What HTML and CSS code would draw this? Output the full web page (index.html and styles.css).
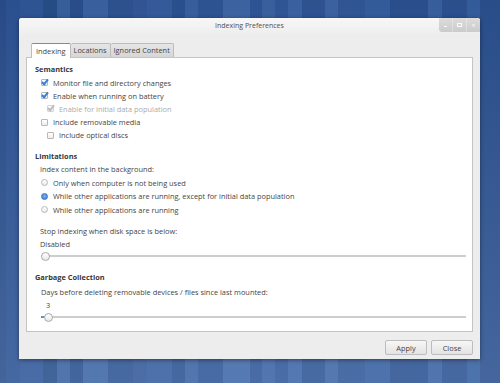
FILE: index.html
```html
<!DOCTYPE html>
<html lang="en">
<head>
    <meta charset="UTF-8">
    <title>Indexing Preferences</title>
    <link rel="stylesheet" href="styles.css">
</head>
<body>
    <div class="window">
        <div class="titlebar">
            <span></span>
            <span class="title">Indexing Preferences</span>
            <div class="controls">
                <span class="ctl"><i class="min"></i></span>
                <span class="ctl"><i class="max"></i></span>
                <span class="ctl">&times;</span>
            </div>
        </div>

        <div class="notebook">
            <div class="tabs">
                <div class="tab active">Indexing</div>
                <div class="tab">Locations</div>
                <div class="tab">Ignored Content</div>
            </div>
            <div class="panel">
                <div class="heading">Semantics</div>
                <div class="row"><span class="check on"></span>Monitor file and directory changes</div>
                <div class="row"><span class="check on"></span>Enable when running on battery</div>
                <div class="row sub disabled"><span class="check on"></span>Enable for initial data population</div>
                <div class="row"><span class="check"></span>Include removable media</div>
                <div class="row sub"><span class="check"></span>Include optical discs</div>

                <div class="heading gap">Limitations</div>
                <div class="label">Index content in the background:</div>
                <div class="row radio-row"><span class="radio"></span>Only when computer is not being used</div>
                <div class="row radio-row"><span class="radio on"></span>While other applications are running, except for initial data population</div>
                <div class="row radio-row"><span class="radio"></span>While other applications are running</div>

                <div class="label gap">Stop indexing when disk space is below:</div>
                <div class="label">Disabled</div>
                <div class="slider"><span class="knob"></span></div>

                <div class="heading gap wide">Garbage Collection</div>
                <div class="label days">Days before deleting removable devices / files since last mounted:</div>
                <div class="label value">3</div>
                <div class="slider"><span class="fill"></span><span class="knob"></span></div>
            </div>
        </div>

        <div class="actions">
            <button>Apply</button>
            <button>Close</button>
        </div>
    </div>
</body>
</html>
```

FILE: styles.css
```css
body {
    margin: 0;
    height: 383px;
    padding: 18px 0 0 19px;
    box-sizing: border-box;
    font-family: "Open Sans", "DejaVu Sans", sans-serif;
    font-size: 7.4px;
    color: #454545;
    overflow: hidden;
    background:
        linear-gradient(180deg, rgba(0, 0, 0, 0.05), rgba(255, 255, 255, 0.12)),
        linear-gradient(90deg,
            #2a4f8e 0 6px, #2d5495 6px 20px, #30589a 20px 43px, #27508b 43px 57px,
            #3a62a2 57px 70px, #2a5190 70px 83px, #3c65a5 83px 108px, #2e5594 108px 133px,
            #34599a 133px 147px, #375ea0 147px 172px, #2b5493 172px 185px, #3a63a3 185px 198px,
            #2f5798 198px 223px, #3f68a8 223px 250px, #30579a 250px 262px, #3b63a4 262px 275px,
            #31599b 275px 288px, #3d66a7 288px 302px, #2f5696 302px 325px, #3e66a6 325px 338px,
            #32599a 338px 365px, #3660a1 365px 390px, #2c5292 390px 428px, #3a62a3 428px 442px,
            #2d5393 442px 467px, #3560a1 467px 480px, #2b5190 480px 500px);
}
.window {
    width: 461px;
    height: 341px;
    background: #ededed;
    border-radius: 3px 3px 0 0;
    box-shadow: 0 1px 4px rgba(0, 0, 0, 0.45);
    display: flex;
    flex-direction: column;
}
.titlebar {
    display: grid;
    grid-template-columns: 1fr auto 1fr;
    height: 18px;
    background: linear-gradient(#f7f7f7, #ededed);
    border-radius: 3px 3px 0 0;
}
.title {
    font-size: 7px;
    color: #505050;
    line-height: 16px;
}
.controls {
    justify-self: end;
    display: flex;
    height: 14px;
    background: linear-gradient(#dcdcdc, #cbcbcb);
    border-radius: 0 3px 0 3px;
}
.ctl {
    width: 13px;
    display: flex;
    align-items: center;
    justify-content: center;
    color: #fafafa;
    font-size: 7px;
    border-left: 1px solid rgba(255, 255, 255, 0.3);
}
.ctl:first-child {
    border-left: none;
}
.min {
    width: 3px;
    height: 1px;
    margin-top: 3px;
    background: #fafafa;
}
.max {
    width: 3px;
    height: 2px;
    border: 1px solid #fafafa;
}
.notebook {
    margin: 6px 7px 0 7px;
}
.tabs {
    display: flex;
    padding-left: 5px;
    height: 15px;
    align-items: flex-end;
}
.tab {
    height: 13px;
    line-height: 13px;
    padding: 0 3px;
    border: 1px solid #bcbcbc;
    border-bottom: none;
    border-left: none;
    background: linear-gradient(#e6e6e6, #d6d6d6);
    border-radius: 2px 2px 0 0;
}
.tab.active {
    height: 14px;
    line-height: 15px;
    padding: 0 4px;
    background: #fff;
    border-left: 1px solid #bcbcbc;
    border-top: 1px solid #5b93d6;
    position: relative;
    top: 1px;
}
.panel {
    height: 268px;
    background: #fff;
    border: 1px solid #c4c4c4;
    padding: 5px 8px 0 8px;
}
.heading {
    font-weight: bold;
    height: 13px;
    line-height: 13px;
    color: #383838;
}
.heading.gap {
    margin-top: 8px;
}
.heading.wide {
    margin-top: 10px;
}
.row {
    display: flex;
    align-items: center;
    height: 13.2px;
    padding-left: 6px;
}
.row.sub {
    padding-left: 12px;
}
.row.disabled {
    color: #ababab;
}
.radio-row {
    height: 13.5px;
}
.label {
    height: 13px;
    line-height: 13px;
    padding-left: 5px;
}
.label.gap {
    margin-top: 9px;
}
.label.days {
    padding-left: 6px;
    margin-top: 2px;
}
.label.value {
    padding-left: 11px;
}
.check {
    width: 5px;
    height: 5px;
    border: 1px solid #b8b8b8;
    border-radius: 1px;
    margin-right: 5px;
    position: relative;
    background: linear-gradient(#fff, #eee);
}
.check.on::after {
    content: "";
    position: absolute;
    left: 1px;
    top: -2px;
    width: 2px;
    height: 5px;
    border: solid #3b7fd4;
    border-width: 0 2px 2px 0;
    transform: rotate(40deg);
}
.disabled .check {
    border-color: #d4d4d4;
}
.disabled .check.on::after {
    border-color: #bdbdbd;
}
.radio {
    width: 5px;
    height: 5px;
    border: 1px solid #b8b8b8;
    border-radius: 50%;
    margin-right: 5px;
    background: linear-gradient(#fff, #eaeaea);
}
.radio.on {
    border-color: #3a74c0;
    background: radial-gradient(circle at 50% 40%, #7fb0ea, #3c7bd0);
}
.slider {
    height: 10px;
    margin-left: 6px;
    width: 425px;
    display: flex;
    align-items: center;
    background: linear-gradient(#cdcdcd, #cdcdcd) no-repeat 0 50% / 100% 2px;
}
.fill {
    width: 3px;
    height: 2px;
    background: #5a92d8;
}
.knob {
    width: 7px;
    height: 7px;
    border: 1px solid #a9a9a9;
    border-radius: 50%;
    background: linear-gradient(#fff, #e8e8e8);
}
.actions {
    display: flex;
    justify-content: flex-end;
    gap: 4px;
    margin: 8px 7px 0 0;
}
button {
    width: 42px;
    height: 15px;
    padding: 0;
    font-family: inherit;
    font-size: 7.4px;
    color: #444;
    border: 1px solid #bdbdbd;
    border-radius: 2px;
    background: linear-gradient(#f7f7f7, #e3e3e3);
}
```
